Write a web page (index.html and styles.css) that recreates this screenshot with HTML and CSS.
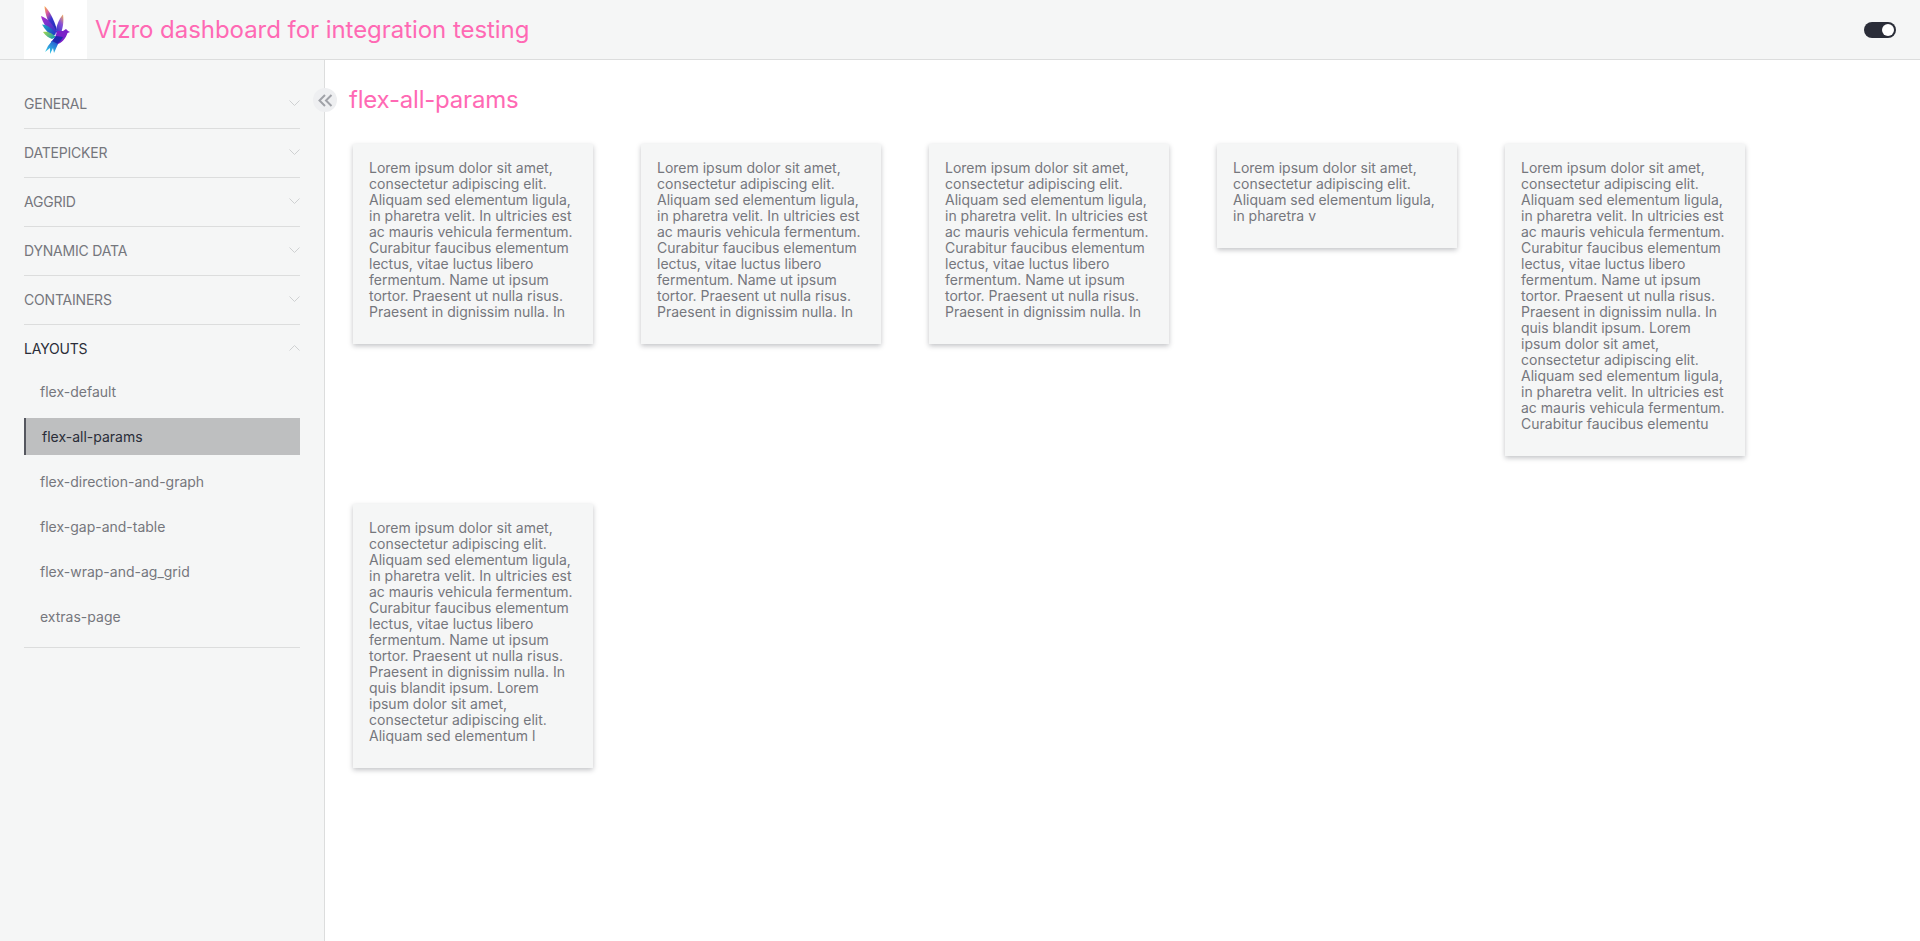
FILE: index.html
```html
<!DOCTYPE html>
<html lang="en">
  <head>
    <meta charset="UTF-8" />
    <meta name="viewport" content="width=device-width, initial-scale=1.0" />
    <title>Vizro dashboard for integration testing</title>
    <link rel="stylesheet" href="styles.css">
  </head>
  <body>
    <header class="header">
      <div class="logo">
        <svg width="29" height="48" viewBox="0 0 29 48">
          <defs>
            <linearGradient id="birdTop" x1="0.1" y1="0" x2="0.8" y2="1">
              <stop offset="0" stop-color="#f5a850" />
              <stop offset="0.25" stop-color="#d858a0" />
              <stop offset="0.55" stop-color="#3a35d0" />
              <stop offset="1" stop-color="#1f2cb0" />
            </linearGradient>
            <linearGradient id="birdWing" x1="0.8" y1="0" x2="0.3" y2="1">
              <stop offset="0" stop-color="#e8a468" />
              <stop offset="0.4" stop-color="#8a50d8" />
              <stop offset="1" stop-color="#2f38c8" />
            </linearGradient>
            <linearGradient id="birdLeft" x1="0" y1="0" x2="1" y2="1">
              <stop offset="0" stop-color="#b030d0" />
              <stop offset="1" stop-color="#2438c8" />
            </linearGradient>
            <linearGradient id="birdBlue" x1="0" y1="0" x2="1" y2="0.6">
              <stop offset="0" stop-color="#20b0c0" />
              <stop offset="1" stop-color="#2040c8" />
            </linearGradient>
            <linearGradient id="birdGreen" x1="0" y1="0" x2="1" y2="0.6">
              <stop offset="0" stop-color="#a8d848" />
              <stop offset="1" stop-color="#18a0b0" />
            </linearGradient>
            <linearGradient id="birdTail" x1="0.8" y1="0" x2="0.2" y2="1">
              <stop offset="0" stop-color="#2458d0" />
              <stop offset="1" stop-color="#38d8e8" />
            </linearGradient>
          </defs>
          <path d="M3.5 0 C8 4 13 13 16 24 L12 25 C8 18 4 9 3.5 0 Z" fill="url(#birdTop)" />
          <path d="M22 8.5 C23 15 22 23 19 29 L15 26 C15 20 18 13 22 8.5 Z" fill="url(#birdWing)" />
          <path d="M0 10 C6 12 12 18 16 26 L13 28 C7 24 2 18 0 10 Z" fill="url(#birdLeft)" />
          <path d="M1 18.5 C6 18.5 12 23 15 28 L12 30 C8 28 4 24 1 18.5 Z" fill="url(#birdBlue)" />
          <path d="M2 26 C7 25 12 28 15 31 L11 33 C8 32 5 30 2 26 Z" fill="url(#birdGreen)" />
          <path d="M16 25 L22 25 L25 23 L27 25 L29 26 L26.5 27 C25 32 21 37 15 39 L11 36 C14 33 15 29 16 25 Z" fill="#7a20c8" />
          <path d="M15 30 L22 31 C20 35 17 38 13 40 L10 36 Z" fill="#1f2ab0" />
          <path d="M11 35 L17 38 L13 47 L12 42 L9 48 L9 42 L4 46 L7 40 Z" fill="url(#birdTail)" />
        </svg>
      </div>
      <h1 class="header-title">Vizro dashboard for integration testing</h1>
      <div class="toggle"><span class="toggle-knob"></span></div>
    </header>

    <div class="main">
      <nav class="sidebar">
        <div class="acc-item">
          <div class="acc-head">
            <span>GENERAL</span>
            <svg class="chevron" viewBox="0 0 11 6"><path d="M0.5 0.5 L5.5 5.5 L10.5 0.5" /></svg>
          </div>
        </div>
        <div class="acc-item">
          <div class="acc-head">
            <span>DATEPICKER</span>
            <svg class="chevron" viewBox="0 0 11 6"><path d="M0.5 0.5 L5.5 5.5 L10.5 0.5" /></svg>
          </div>
        </div>
        <div class="acc-item">
          <div class="acc-head">
            <span>AGGRID</span>
            <svg class="chevron" viewBox="0 0 11 6"><path d="M0.5 0.5 L5.5 5.5 L10.5 0.5" /></svg>
          </div>
        </div>
        <div class="acc-item">
          <div class="acc-head">
            <span>DYNAMIC DATA</span>
            <svg class="chevron" viewBox="0 0 11 6"><path d="M0.5 0.5 L5.5 5.5 L10.5 0.5" /></svg>
          </div>
        </div>
        <div class="acc-item">
          <div class="acc-head">
            <span>CONTAINERS</span>
            <svg class="chevron" viewBox="0 0 11 6"><path d="M0.5 0.5 L5.5 5.5 L10.5 0.5" /></svg>
          </div>
        </div>
        <div class="acc-item open">
          <div class="acc-head">
            <span>LAYOUTS</span>
            <svg class="chevron" viewBox="0 0 11 6"><path d="M0.5 5.5 L5.5 0.5 L10.5 5.5" /></svg>
          </div>
          <div class="acc-body">
            <a class="nav-link">flex-default</a>
            <a class="nav-link active">flex-all-params</a>
            <a class="nav-link">flex-direction-and-graph</a>
            <a class="nav-link">flex-gap-and-table</a>
            <a class="nav-link">flex-wrap-and-ag_grid</a>
            <a class="nav-link">extras-page</a>
          </div>
        </div>
        <button class="collapse-btn">
          <svg width="15" height="13" viewBox="0 0 15 13"><path d="M7 1 L1.5 6.5 L7 12 M13.5 1 L8 6.5 L13.5 12" /></svg>
        </button>
      </nav>

      <main class="page">
        <h2 class="page-title">flex-all-params</h2>
        <div class="flex-wrap">
          <div class="card"><p>Lorem ipsum dolor sit amet, consectetur adipiscing elit. Aliquam sed elementum ligula, in pharetra velit. In ultricies est ac mauris vehicula fermentum. Curabitur faucibus elementum lectus, vitae luctus libero fermentum. Name ut ipsum tortor. Praesent ut nulla risus. Praesent in dignissim nulla. In</p></div>
          <div class="card"><p>Lorem ipsum dolor sit amet, consectetur adipiscing elit. Aliquam sed elementum ligula, in pharetra velit. In ultricies est ac mauris vehicula fermentum. Curabitur faucibus elementum lectus, vitae luctus libero fermentum. Name ut ipsum tortor. Praesent ut nulla risus. Praesent in dignissim nulla. In</p></div>
          <div class="card"><p>Lorem ipsum dolor sit amet, consectetur adipiscing elit. Aliquam sed elementum ligula, in pharetra velit. In ultricies est ac mauris vehicula fermentum. Curabitur faucibus elementum lectus, vitae luctus libero fermentum. Name ut ipsum tortor. Praesent ut nulla risus. Praesent in dignissim nulla. In</p></div>
          <div class="card"><p>Lorem ipsum dolor sit amet, consectetur adipiscing elit. Aliquam sed elementum ligula, in pharetra v</p></div>
          <div class="card"><p>Lorem ipsum dolor sit amet, consectetur adipiscing elit. Aliquam sed elementum ligula, in pharetra velit. In ultricies est ac mauris vehicula fermentum. Curabitur faucibus elementum lectus, vitae luctus libero fermentum. Name ut ipsum tortor. Praesent ut nulla risus. Praesent in dignissim nulla. In quis blandit ipsum. Lorem ipsum dolor sit amet, consectetur adipiscing elit. Aliquam sed elementum ligula, in pharetra velit. In ultricies est ac mauris vehicula fermentum. Curabitur faucibus elementu</p></div>
          <div class="card"><p>Lorem ipsum dolor sit amet, consectetur adipiscing elit. Aliquam sed elementum ligula, in pharetra velit. In ultricies est ac mauris vehicula fermentum. Curabitur faucibus elementum lectus, vitae luctus libero fermentum. Name ut ipsum tortor. Praesent ut nulla risus. Praesent in dignissim nulla. In quis blandit ipsum. Lorem ipsum dolor sit amet, consectetur adipiscing elit. Aliquam sed elementum l</p></div>
        </div>
      </main>
    </div>
  </body>
</html>
```

FILE: styles.css
```css
* {
  box-sizing: border-box;
}

html,
body {
  height: 100%;
}

body {
  margin: 0;
  font-family: Inter, sans-serif;
  background-color: #fff;
  overflow: hidden;
}

.header {
  display: flex;
  align-items: center;
  height: 60px;
  padding: 0 24px;
  background-color: #f5f6f6;
  border-bottom: 1px solid #dcdddd;
}

.logo {
  display: flex;
  align-items: center;
  justify-content: center;
  width: 63px;
  height: 59px;
  background-color: #fff;
}

.header-title {
  margin: 0 0 0 8px;
  font-size: 24px;
  font-weight: 400;
  letter-spacing: -0.05px;
  color: #ff69b4;
}

.toggle {
  display: flex;
  align-items: center;
  justify-content: flex-end;
  width: 32px;
  height: 16px;
  margin-left: auto;
  padding-right: 2px;
  background-color: #2a2d38;
  border-radius: 8px;
}

.toggle-knob {
  width: 12px;
  height: 12px;
  background-color: #fff;
  border-radius: 50%;
}

.main {
  display: flex;
  height: 881px;
}

.sidebar {
  position: relative;
  flex: 0 0 325px;
  padding: 20px 24px 0;
  background-color: #f5f6f6;
  border-right: 1px solid #dcdddd;
}

.acc-item {
  border-bottom: 1px solid #dcdddd;
}

.acc-head {
  display: flex;
  align-items: center;
  justify-content: space-between;
  height: 48px;
  padding-bottom: 2px;
  font-size: 14px;
  letter-spacing: -0.2px;
  color: #75777d;
}

.open .acc-head {
  color: #2a2d38;
}

.chevron {
  width: 11px;
  height: 6px;
  fill: none;
  stroke: #cfd1d2;
  stroke-width: 1;
}

.acc-body {
  display: flex;
  flex-direction: column;
  gap: 8px;
  padding-bottom: 12px;
}

.nav-link {
  display: flex;
  align-items: center;
  height: 37px;
  padding-left: 16px;
  font-size: 14px;
  color: #75777d;
}

.nav-link.active {
  color: #2a2d38;
  background-color: #bebfc0;
  border-left: 2px solid #55575f;
}

.collapse-btn {
  position: absolute;
  top: 28px;
  right: -13px;
  display: flex;
  align-items: center;
  justify-content: center;
  width: 24px;
  height: 24px;
  padding: 0;
  background-color: #eeeff1;
  border: none;
  border-radius: 50%;
}

.collapse-btn path {
  fill: none;
  stroke: #a0a2a8;
  stroke-width: 2;
}

.page {
  flex: 1;
  padding: 24px 24px 0;
}

.page-title {
  margin: 0 0 24px;
  font-size: 24px;
  font-weight: 400;
  line-height: 32px;
  letter-spacing: -0.2px;
  color: #ff69b4;
}

.flex-wrap {
  display: flex;
  flex-wrap: wrap;
  align-items: flex-start;
  gap: 48px;
  padding: 4px;
}

.card {
  width: 240px;
  padding: 16px;
  background-color: #f5f6f6;
  box-shadow: 0 2px 5px rgba(20, 23, 33, 0.26);
}

.card p {
  margin: 0 0 8px;
  font-size: 14px;
  line-height: 16px;
  color: #75777d;
}
```
